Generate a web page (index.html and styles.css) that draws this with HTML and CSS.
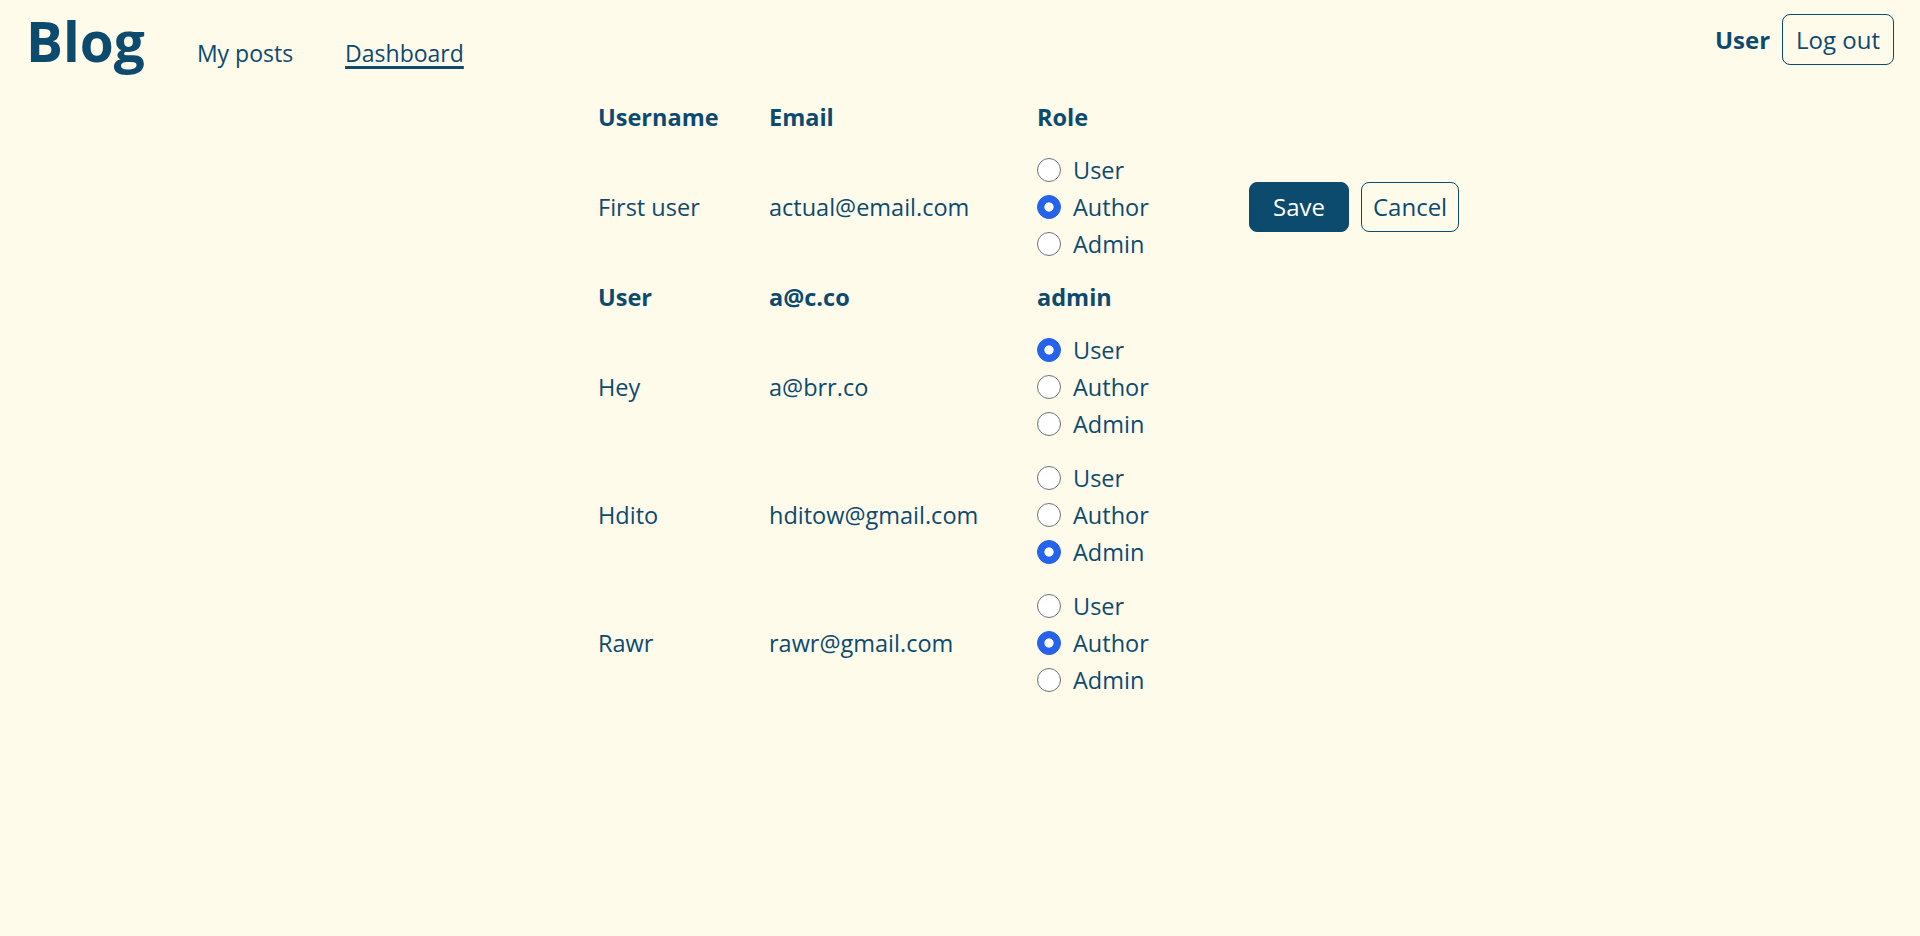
FILE: index.html
```html
<!DOCTYPE html>
<html lang="en">
<head>
<meta charset="utf-8">
<title>Blog - Dashboard</title>
<link rel="stylesheet" href="styles.css">
</head>
<body>
<header class="topbar">
  <div class="brand-nav">
    <h1 class="logo">Blog</h1>
    <nav class="nav">
      <a class="nav-link" href="#">My posts</a>
      <a class="nav-link active" href="#">Dashboard</a>
    </nav>
  </div>
  <div class="account">
    <span class="account-name">User</span>
    <button class="btn btn-outline btn-logout" type="button">Log out</button>
  </div>
</header>
<main class="content">
  <table class="users">
    <colgroup>
      <col class="col-name">
      <col class="col-email">
      <col class="col-role">
      <col class="col-actions">
    </colgroup>
    <thead>
      <tr class="row-text">
        <th>Username</th>
        <th>Email</th>
        <th>Role</th>
        <th></th>
      </tr>
    </thead>
    <tbody>
      <tr class="row-radio">
        <td>First user</td>
        <td>actual@email.com</td>
        <td>
          <div class="roles">
            <label class="role"><input type="radio" name="r1"> User</label>
            <label class="role"><input type="radio" name="r1" checked> Author</label>
            <label class="role"><input type="radio" name="r1"> Admin</label>
          </div>
        </td>
        <td>
          <div class="actions">
            <button class="btn btn-solid" type="button">Save</button>
            <button class="btn btn-outline" type="button">Cancel</button>
          </div>
        </td>
      </tr>
      <tr class="row-text row-self">
        <td>User</td>
        <td>a@c.co</td>
        <td>admin</td>
        <td></td>
      </tr>
      <tr class="row-radio">
        <td>Hey</td>
        <td>a@brr.co</td>
        <td>
          <div class="roles">
            <label class="role"><input type="radio" name="r2" checked> User</label>
            <label class="role"><input type="radio" name="r2"> Author</label>
            <label class="role"><input type="radio" name="r2"> Admin</label>
          </div>
        </td>
        <td></td>
      </tr>
      <tr class="row-radio">
        <td>Hdito</td>
        <td>hditow@gmail.com</td>
        <td>
          <div class="roles">
            <label class="role"><input type="radio" name="r3"> User</label>
            <label class="role"><input type="radio" name="r3"> Author</label>
            <label class="role"><input type="radio" name="r3" checked> Admin</label>
          </div>
        </td>
        <td></td>
      </tr>
      <tr class="row-radio">
        <td>Rawr</td>
        <td>rawr@gmail.com</td>
        <td>
          <div class="roles">
            <label class="role"><input type="radio" name="r4"> User</label>
            <label class="role"><input type="radio" name="r4" checked> Author</label>
            <label class="role"><input type="radio" name="r4"> Admin</label>
          </div>
        </td>
        <td></td>
      </tr>
    </tbody>
  </table>
</main>
</body>
</html>
```

FILE: styles.css
```css
* { box-sizing: border-box; }

html, body {
  margin: 0;
  background: #fffbeb;
  color: #0c4a6e;
  font-family: "Open Sans", "Noto Sans", sans-serif;
}

body { min-height: 936px; }

.topbar {
  display: flex;
  justify-content: space-between;
  align-items: flex-start;
  height: 91px;
  padding: 13px 26px 0 26px;
}

.brand-nav {
  display: flex;
  align-items: baseline;
  gap: 52px;
}

.logo {
  margin: 0;
  font-size: 55px;
  line-height: 56px;
  font-weight: 700;
}

.nav {
  display: flex;
  gap: 52px;
}

.nav-link {
  color: #0c4a6e;
  font-size: 23px;
  line-height: 30px;
  text-decoration: none;
}

.nav-link.active {
  text-decoration: underline;
  text-decoration-thickness: 3px;
  text-underline-offset: 4px;
}

.account {
  display: flex;
  align-items: center;
  gap: 12px;
  padding-top: 1px;
}

.account-name {
  font-size: 24px;
  font-weight: 700;
}

.btn {
  font-family: inherit;
  font-size: 24px;
  line-height: 32px;
  color: #0c4a6e;
  border-radius: 8px;
  cursor: pointer;
  height: 50px;
}

.btn-outline {
  background: transparent;
  border: 1px solid #0c4a6e;
  padding: 0 11px;
}

.btn-logout {
  height: 51px;
  padding: 0 13px;
}

.btn-solid {
  background: #0c4a6e;
  border: 1px solid #0c4a6e;
  color: #ffffff;
  padding: 0 23px;
}

.content {
  display: flex;
  justify-content: center;
}

.users {
  width: 724px;
  table-layout: fixed;
  border-collapse: collapse;
  font-size: 23.5px;
}

.col-name { width: 171px; }
.col-email { width: 268px; }
.col-role { width: 212px; }
.col-actions { width: 73px; }

.users th,
.users td {
  padding: 0;
  text-align: left;
  vertical-align: middle;
  white-space: nowrap;
}

.users th { font-weight: 700; }

.row-text { height: 52px; }
.row-self td { font-weight: 700; }

.row-radio { height: 128px; }

.roles {
  display: flex;
  flex-direction: column;
}

.role {
  display: flex;
  align-items: center;
  gap: 12px;
  height: 37px;
}

.role input {
  appearance: none;
  -webkit-appearance: none;
  margin: 0;
  width: 24px;
  height: 24px;
  border: 1px solid #6b7280;
  border-radius: 50%;
  background: #ffffff;
  flex: none;
}

.role input:checked {
  border-color: #2563eb;
  background: radial-gradient(circle, #ffffff 0 4.2px, #2563eb 5px);
}

.actions {
  display: flex;
  gap: 12px;
}
```
